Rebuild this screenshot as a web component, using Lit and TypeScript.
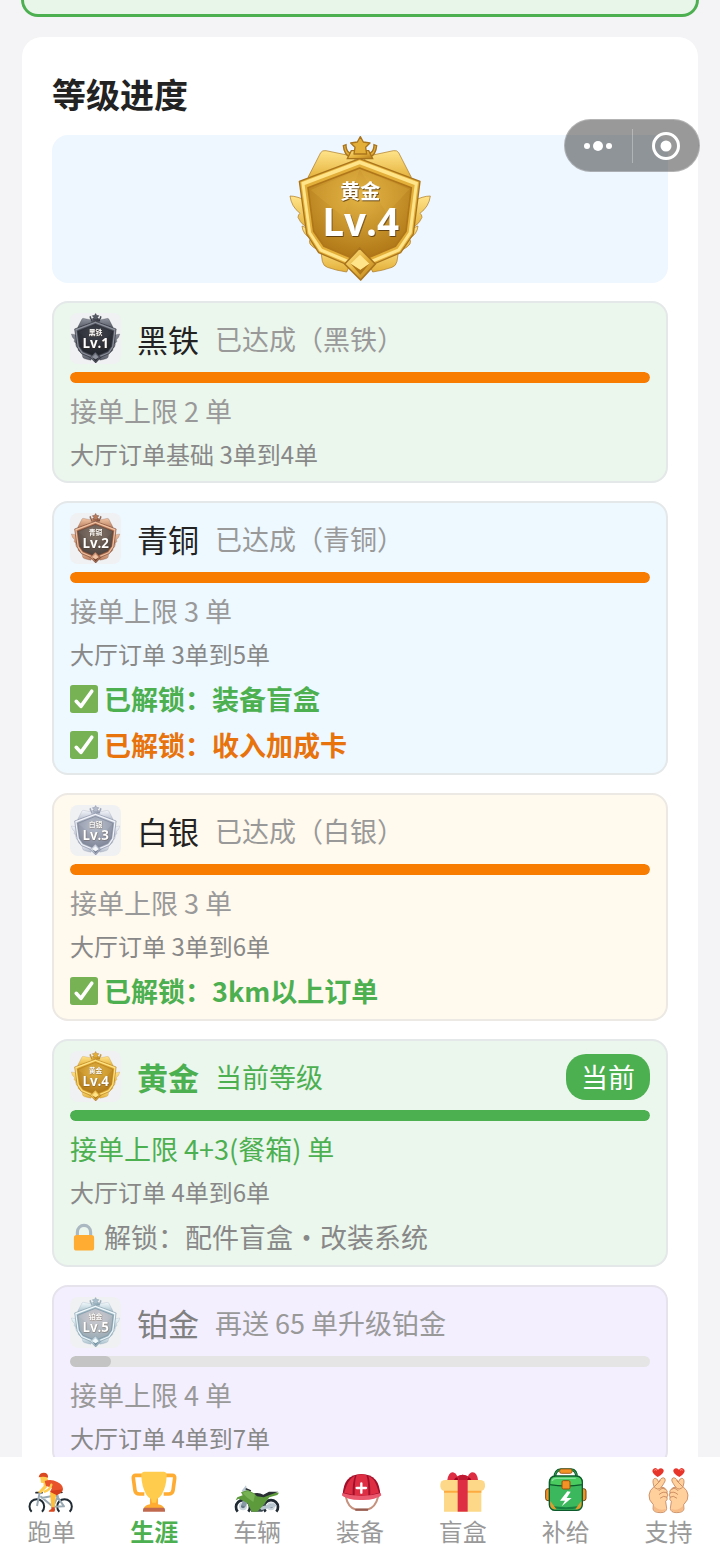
import { LitElement, html, svg, css } from 'lit';
import { customElement, property, state } from 'lit/decorators.js';
import { classMap } from 'lit/directives/class-map.js';
import { styleMap } from 'lit/directives/style-map.js';

interface Palette {
  light: string;
  mid: string;
  dark: string;
  edge: string;
  face: string;
  faceLight: string;
}

interface Unlock {
  icon: 'check' | 'lock';
  tone: string;
  text: string;
}

interface Level {
  level: number;
  name: string;
  status: string;
  progress: number;
  limit: string;
  hall: string;
  theme: string;
  state: 'done' | 'current' | 'locked';
  unlocks: Unlock[];
}

const PALETTES: Record<number, Palette> = {
  1: { light: '#8f939d', mid: '#565a65', dark: '#2b2d35', edge: '#22242b', face: '#202229', faceLight: '#40434d' },
  2: { light: '#f0c4a4', mid: '#b97c5c', dark: '#6b3e2c', edge: '#6a4032', face: '#4a403b', faceLight: '#85756a' },
  3: { light: '#f4f6fb', mid: '#b4bccb', dark: '#737b8e', edge: '#8189a0', face: '#7d8496', faceLight: '#b9bfcd' },
  4: { light: '#ffe48a', mid: '#e3af38', dark: '#b0761a', edge: '#a9741c', face: '#ad7414', faceLight: '#e3b445' },
  5: { light: '#f2fafd', mid: '#a9c0cc', dark: '#6c8b9b', edge: '#7f9aa8', face: '#98a9b3', faceLight: '#cfccd2' },
};

const LEVELS: Level[] = [
  {
    level: 1, name: '黑铁', status: '已达成（黑铁）', progress: 100, limit: '接单上限 2 单',
    hall: '大厅订单基础 3单到4单', theme: 'green', state: 'done', unlocks: [],
  },
  {
    level: 2, name: '青铜', status: '已达成（青铜）', progress: 100, limit: '接单上限 3 单',
    hall: '大厅订单 3单到5单', theme: 'blue', state: 'done',
    unlocks: [
      { icon: 'check', tone: 'tone-green', text: '已解锁：装备盲盒' },
      { icon: 'check', tone: 'tone-orange', text: '已解锁：收入加成卡' },
    ],
  },
  {
    level: 3, name: '白银', status: '已达成（白银）', progress: 100, limit: '接单上限 3 单',
    hall: '大厅订单 3单到6单', theme: 'cream', state: 'done',
    unlocks: [{ icon: 'check', tone: 'tone-green', text: '已解锁：3km以上订单' }],
  },
  {
    level: 4, name: '黄金', status: '当前等级', progress: 100, limit: '接单上限 4+3(餐箱) 单',
    hall: '大厅订单 4单到6单', theme: 'green', state: 'current',
    unlocks: [{ icon: 'lock', tone: 'tone-grey', text: '解锁：配件盲盒・改装系统' }],
  },
  {
    level: 5, name: '铂金', status: '再送 65 单升级铂金', progress: 7, limit: '接单上限 4 单',
    hall: '大厅订单 4单到7单', theme: 'purple', state: 'locked', unlocks: [],
  },
];

const checkIcon = html`<svg class="mark" viewBox="0 0 36 36" aria-hidden="true">
  <rect width="36" height="36" rx="3.5" fill="#77b255" />
  <path d="M8 21 L14 27.5 L28 8" fill="none" stroke="#fff" stroke-width="4.6" stroke-linecap="round" stroke-linejoin="round" />
</svg>`;

const lockIcon = html`<svg class="mark" viewBox="0 0 36 36" aria-hidden="true">
  <path d="M9.5 18 V11.5 a8.5 8.5 0 0 1 17 0 V18" fill="none" stroke="#aab8c2" stroke-width="4" />
  <rect x="5" y="15.5" width="26" height="20" rx="3.5" fill="#ffac33" />
</svg>`;

const NAV = [
  {
    label: '跑单',
    art: svg`
      <g fill="none" stroke="#1f2a33" stroke-width="6">
        <path d="M14 137 A22 22 0 1 1 45 137" />
        <path d="M97 137 A22 22 0 1 1 128 137" />
      </g>
      <path d="M27 80 h18" stroke="#292f33" stroke-width="5" stroke-linecap="round" />
      <path d="M38 80 L30 120 M40 91 L78 122 L94 88 M44 96 L88 88 L111 121 L78 122 M82 78 L92 92" fill="none" stroke="#9aaab4" stroke-width="6" stroke-linejoin="round" />
      <path d="M88 75 q16 -4 20 5 q-10 4 -20 0z" fill="#292f33" />
      <path d="M39 31 h20 l5 12 -9 9 -13 -2z" fill="#ffcc4d" />
      <path d="M35 34 q3 -16 21 -13 q8 3 7 14 q-13 -5 -28 -1z" fill="#d9481f" />
      <path d="M49 43 L58 46 L60 64 L42 82 L33 79 L50 60z" fill="#ffcc4d" />
      <path d="M53 45 q20 -7 38 3 q15 7 17 20 q0 9 -9 12 l-24 3 -6 -5 6 -13 -18 -5z" fill="#e9532b" />
      <path d="M73 56 q-3 14 -20 21" fill="none" stroke="#ffcc4d" stroke-width="7" stroke-linecap="round" />
      <path d="M70 75 L106 70 q-6 17 -22 19z" fill="#d63f1b" />
      <path d="M69 78 l18 8 -4 39 -10 0z" fill="#ffbf3a" />
      <path d="M73 124 h10 q3 10 -1 13 h-17 q0 -5 8 -8z" fill="#d9481f" />`,
  },
  {
    label: '生涯',
    art: svg`
      <path d="M38 28 H17 Q9 28 10 37 L15 74 Q17 84 28 84 H43 M105 28 H127 Q135 28 134 37 L129 74 Q127 84 116 84 H101" fill="none" stroke="#ffac33" stroke-width="11" />
      <path d="M60 88 h24 v27 q14 2 19 12 h-62 q5 -10 19 -12z" fill="#ffac33" />
      <path d="M42 17 H102 Q111 18 110 30 Q109 62 95 86 Q85 100 72 100 Q59 100 49 86 Q35 62 34 30 Q33 18 42 17z" fill="#ffcc4d" />
      <path d="M62 92 h20 l-4 18 h-12z" fill="#ffcc4d" />
      <path d="M44 125 h56 q5 0 5 6 v6 H39 v-6 q0 -6 5 -6z" fill="#c1694f" />`,
  },
  {
    label: '车辆',
    art: svg`
      <g fill="none" stroke="#1f2a33" stroke-width="8">
        <path d="M14 137 A21 21 0 1 1 46 137" />
        <path d="M98 137 A21 21 0 1 1 130 137" />
      </g>
      <circle cx="30" cy="121" r="12" fill="#ccd6dd" />
      <circle cx="114" cy="121" r="12" fill="#ccd6dd" />
      <circle cx="30" cy="121" r="6" fill="#657786" />
      <circle cx="114" cy="121" r="6" fill="#657786" />
      <path d="M39 58 L26 74 L34 82 L43 78" fill="#b9c8d2" />
      <path d="M40 69 L52 74" stroke="#292f33" stroke-width="5" stroke-linecap="round" />
      <path d="M36 84 L25 118 L38 122 L48 96z" fill="#8899a6" />
      <path d="M52 96 L92 92 L100 121 L88 137 L54 137z" fill="#3e4b54" />
      <path d="M76 124 L124 112 L132 120 L86 132z" fill="#b8c6cf" />
      <path d="M24 79 L44 72 L66 83 L86 91 L111 78 L138 80 L133 87 L109 94 L91 118 L73 137 H56 L43 111 L18 98 L8 103 L13 94 L29 88z" fill="#5c9a3b" />
      <path d="M28 80 L45 75 L66 86 L61 108 L43 95z" fill="#77b255" />
      <path d="M63 82 Q79 79 91 86 L108 77 L136 77 L112 86 L92 94 L72 91z" fill="#292f33" />`,
  },
  {
    label: '装备',
    art: svg`
      <path d="M29 90 Q36 127 61 131 H93 Q118 127 127 90" fill="none" stroke="#c6927e" stroke-width="6" />
      <path d="M61 131 h32" stroke="#965c50" stroke-width="7" stroke-linecap="round" />
      <path d="M20 90 Q21 25 76 24 Q132 25 133 90 Q76 108 20 90z" fill="#a0102a" />
      <path d="M33 56 Q41 37 57 29 Q49 49 50 86 L24 80z M62 27 Q76 22 91 27 Q98 47 97 89 H56 Q55 47 62 27z M97 29 Q115 38 121 57 L129 80 L103 87 Q103 47 97 29z" fill="#dd2e44" />
      <path d="M19 81 Q76 99 134 81 L136 88 Q118 103 77 102 Q34 103 18 88z" fill="#ea596e" />
      <path d="M76 52 v28 M62 66 h28" stroke="#fff" stroke-width="7" stroke-linecap="round" />`,
  },
  {
    label: '盲盒',
    art: svg`
      <path d="M15 65 h112 v72 h-112z" fill="#fdd888" />
      <rect x="4" y="42" width="134" height="33" rx="14" fill="#fdd888" />
      <path d="M15 74 h112 v6 h-112z" fill="#fcab40" />
      <path d="M56 42 h30 v95 h-30z" fill="#dd2e44" />
      <path d="M25 42 Q29 18 42 19 Q51 21 55 31 Q71 21 87 31 Q91 20 101 19 Q114 20 117 42z" fill="#dd2e44" />
      <path d="M57 31 Q71 21 86 31 L83 42 H60z" fill="#be1931" />
      <path d="M45 42 Q48 33 55 34 L58 42z M97 42 Q94 33 87 34 L84 42z" fill="#a0041e" />`,
  },
  {
    label: '补给',
    art: svg`
      <path d="M39 34 Q38 13 57 11 H87 Q105 13 103 34" fill="none" stroke="#0d5b2c" stroke-width="8" />
      <path d="M39 34 Q38 13 57 11 H87 Q105 13 103 34" fill="none" stroke="#2fa756" stroke-width="3" />
      <rect x="53" y="9" width="37" height="13" rx="5" fill="#f39325" stroke="#9a4f0e" stroke-width="2.5" />
      <rect x="11" y="68" width="20" height="36" rx="7" fill="#f39325" stroke="#7a450f" stroke-width="3" />
      <rect x="112" y="68" width="20" height="36" rx="7" fill="#f39325" stroke="#7a450f" stroke-width="3" />
      <rect x="22" y="32" width="99" height="101" rx="17" fill="#3bb85d" stroke="#0d5b2c" stroke-width="4" />
      <path d="M31 123 Q71 130 112 123" fill="none" stroke="#178040" stroke-width="6" />
      <path d="M25 105 v12 q2 11 12 13 h6z M118 105 v12 q-2 11 -12 13 h-6z" fill="#e79a2c" />
      <path d="M23 49 Q23 31 40 30 H103 Q120 31 121 49 V56 Q72 64 23 56z" fill="#4acb60" stroke="#0d5b2c" stroke-width="4" />
      <path d="M31 43 Q34 37 43 37 H100" fill="none" stroke="#89e29d" stroke-width="4" stroke-linecap="round" />
      <rect x="60" y="44" width="24" height="25" rx="4" fill="#f39325" stroke="#9a4f0e" stroke-width="3" />
      <path d="M76 76 L54 104 H69 L59 121 L89 96 H74 L86 77z" fill="#fff" />`,
  },
  {
    label: '支持',
    art: svg`
      ${[1, -1].map((side) => svg`
        <g transform=${side === 1 ? 'translate(0 0)' : 'translate(141 0) scale(-1 1)'}>
          <path d="M38 33 Q18 20 23 11 Q31 1 39 11 Q50 2 56 12 Q58 22 38 33z" fill="#e8352c" />
          <path d="M29 12 q3 -3 6 0" fill="none" stroke="#ff9a8e" stroke-width="3" stroke-linecap="round" />
          <path d="M24 50 Q23 37 31 37 Q38 38 40 47 L48 38 Q55 32 60 38 Q63 44 56 53 L49 64 Q60 63 62 70 Q69 73 66 81 Q71 87 66 93 Q69 101 62 106 L65 127 Q64 140 47 140 Q26 140 24 129 L25 116 Q10 102 12 87 Q13 73 27 62z" fill="#ffcf9c" stroke="#b56f46" stroke-width="2" stroke-linejoin="round" />
          <path d="M30 60 L46 44 M27 62 Q38 76 49 64 M42 74 Q51 62 61 70 M43 85 Q55 74 66 81 M46 96 Q56 87 65 93" fill="none" stroke="#b56f46" stroke-width="2" stroke-linecap="round" />
          <path d="M27 120 Q42 136 62 129 Q60 138 46 138 Q28 138 27 129z" fill="#f6ba86" />
        </g>`)}`,
  },
];

@customElement('level-badge')
export class LevelBadge extends LitElement {
  @property({ type: Number }) level = 1;
  @property() name = '';

  static styles = css`
    :host {
      display: block;
    }

    svg {
      display: block;
      width: 100%;
      height: 100%;
    }

    text {
      font-weight: bold;
      text-anchor: middle;
      fill: white;
    }

    .label {
      filter: drop-shadow(2px 3px 2px rgba(60, 35, 10, 0.7));
    }

    .name {
      font-family: 'Noto Sans CJK SC', sans-serif;
      font-size: 60px;
    }

    .lv {
      font-family: 'Open Sans', sans-serif;
      font-size: 116px;
    }
  `;

  render() {
    const p = PALETTES[this.level];
    return html`
      <svg viewBox="48 45 444 444" role="img" aria-label="${this.name} Lv.${this.level}">
        <defs>
          <linearGradient id="metal" x1="0" y1="0" x2="1" y2="1">
            <stop offset="0" stop-color=${p.light} />
            <stop offset="0.55" stop-color=${p.mid} />
            <stop offset="1" stop-color=${p.dark} />
          </linearGradient>
          <linearGradient id="plate" x1="0" y1="0" x2="0" y2="1">
            <stop offset="0" stop-color=${p.light} />
            <stop offset="1" stop-color=${p.mid} />
          </linearGradient>
          <radialGradient id="face" cx="0.5" cy="0.3" r="0.7">
            <stop offset="0" stop-color=${p.faceLight} />
            <stop offset="1" stop-color=${p.face} />
          </radialGradient>
        </defs>
        <g fill="url(#plate)" stroke=${p.edge} stroke-width="2" stroke-linejoin="round">
          <path d="M114 172 L152 98 Q157 90 168 92 L236 106 L264 124 L150 180z M424 172 L386 98 Q381 90 370 92 L304 106 L274 124 L388 180z" />
          <path d="M150 376 L246 420 L230 456 Q200 452 172 442 Q160 438 157 424z M388 376 L292 420 L308 456 Q338 452 366 442 Q378 438 381 424z" />
          <path d="M96 318 L138 336 L166 396 Q134 390 120 372 Q116 362 122 356 Q98 342 96 318z M444 318 L402 336 L374 396 Q406 390 420 372 Q424 362 418 356 Q442 342 444 318z" />
          <path d="M60 228 Q82 228 112 244 L128 330 Q96 320 84 292 Q84 284 90 280 Q64 260 60 228z M481 228 Q458 228 428 244 L412 330 Q444 320 456 292 Q456 284 450 280 Q477 260 481 228z" />
        </g>
        <path d="M220 77 Q222 104 242 113 L238 98 Q228 92 228 74z M320 77 Q318 104 298 113 L302 98 Q312 92 312 74z" fill=${p.mid} stroke=${p.edge} stroke-width="4" />
        <path d="M244 92 L296 92 L308 116 L232 116z" fill="url(#metal)" stroke=${p.edge} stroke-width="4" />
        <path d="M271 50 L280 66 L300 69 L287 82 L290 102 H252 L255 82 L242 69 L262 66z" fill=${p.mid} stroke=${p.edge} stroke-width="4" stroke-linejoin="round" />
        <path d="M269 116 L450 184 L430 342 L392 398 L269 450 L146 398 L110 342 L88 184z" fill=${p.mid} stroke=${p.edge} stroke-width="4" stroke-linejoin="round" />
        <path d="M269 121 L444 187 L425 340 L389 394 L269 444 L149 394 L115 340 L94 187 Z M269 133 L434 195 L416 337 L383 386 L269 434 L156 386 L123 337 L104 195z" fill=${p.light} fill-rule="evenodd" />
        <path d="M269 144 L424 203 L408 334 L376 379 L269 424 L162 379 L131 334 L114 203z" fill="url(#face)" stroke=${p.dark} stroke-width="5" stroke-linejoin="round" />
        <path d="M269 148 L220 290 L122 210z M269 148 L350 280 L418 208z" fill=${p.faceLight} opacity="0.25" />
        <path d="M269 384 L316 432 L272 480 L224 432z" fill="url(#metal)" stroke=${p.edge} stroke-width="5" stroke-linejoin="round" />
        <path d="M270 404 L298 431 L271 450 L242 431z" fill=${p.light} />
        <path d="M242 431 L271 450 L298 431 L271 464z" fill=${p.dark} />
        <g class="label">
          <text class="name" x="271" y="237">${this.name}</text>
          <text class="lv" x="272" y="347">Lv.${this.level}</text>
        </g>
      </svg>
    `;
  }
}

@customElement('level-card')
export class LevelCard extends LitElement {
  @property({ attribute: false }) item!: Level;

  static styles = css`
    :host {
      display: block;
    }

    .card {
      border: 2px solid #e4e8e8;
      border-radius: 16px;
      padding: 10px 16px 9px;
    }

    .green {
      background-color: #ebf6ed;
    }

    .blue {
      background-color: #eef8ff;
    }

    .cream {
      border-color: #ece9e4;
      background-color: #fff9ee;
    }

    .purple {
      border-color: #e6e3ec;
      background-color: #f3efff;
    }

    .head {
      display: flex;
      align-items: center;
      height: 51px;
    }

    level-badge {
      width: 51px;
      height: 51px;
      border-radius: 8px;
      background-color: #f0f1f3;
    }

    h3 {
      margin: 0 16px;
      font-size: 31px;
      font-weight: 400;
      color: #222;
    }

    .status {
      font-size: 27px;
      color: #999;
    }

    .tag {
      margin-left: auto;
      padding: 0 15px;
      border-radius: 20px;
      background-color: #4caf50;
      color: white;
      font-size: 27px;
      line-height: 46px;
    }

    .bar {
      height: 11px;
      margin: 8px 0;
      border-radius: 6px;
      background-color: #e5e5e5;
      overflow: hidden;
    }

    .fill {
      height: 100%;
      border-radius: 6px;
      background-color: #f77c00;
    }

    p {
      margin: 0;
    }

    .limit {
      font-size: 27px;
      line-height: 39px;
      color: #999;
    }

    .hall {
      margin-top: 6px;
      font-size: 24px;
      line-height: 36px;
      color: #888;
    }

    .unlock {
      display: flex;
      align-items: center;
      gap: 6px;
      margin-top: 7px;
      font-size: 27px;
      line-height: 39px;
    }

    .mark {
      width: 28px;
      height: 28px;
    }

    .tone-green {
      color: #4caf50;
      font-weight: bold;
    }

    .tone-orange {
      color: #e8730c;
      font-weight: bold;
    }

    .tone-grey {
      color: #888;
    }

    .current h3 {
      color: #4caf50;
      font-weight: bold;
    }

    .current .status,
    .current .limit {
      color: #4caf50;
    }

    .current .fill {
      background-color: #4caf50;
    }

    .locked h3 {
      color: #808080;
    }

    .locked .fill {
      background-color: #c4c4c4;
    }
  `;

  render() {
    const item = this.item;
    return html`
      <article class=${classMap({ card: true, [item.theme]: true, [item.state]: true })}>
        <div class="head">
          <level-badge .level=${item.level} .name=${item.name}></level-badge>
          <h3>${item.name}</h3>
          <span class="status">${item.status}</span>
          ${item.state === 'current' ? html`<span class="tag">当前</span>` : ''}
        </div>
        <div class="bar">
          <div class="fill" style=${styleMap({ width: `${item.progress}%` })}></div>
        </div>
        <p class="limit">${item.limit}</p>
        <p class="hall">${item.hall}</p>
        ${item.unlocks.map((u) => html`
          <p class="unlock ${u.tone}">${u.icon === 'check' ? checkIcon : lockIcon}<span>${u.text}</span></p>
        `)}
      </article>
    `;
  }
}

@customElement('app-root')
export class AppRoot extends LitElement {
  @state() private active = '生涯';

  static styles = css`
    :host {
      position: relative;
      display: flex;
      flex-direction: column;
      height: 100vh;
      background-color: #f4f4f6;
      font-family: 'Noto Sans CJK SC', sans-serif;
      color: #222;
    }

    main {
      flex: 1;
      min-height: 0;
      padding: 0 22px;
      overflow-y: auto;
      scrollbar-width: none;
    }

    .banner {
      height: 14px;
      margin: 0 -1px 20px;
      border: 3px solid #4caf50;
      border-top: none;
      border-radius: 0 0 20px 20px;
      background-color: #e8f5e9;
    }

    .panel {
      padding: 30px 30px 40px;
      border-radius: 20px;
      background-color: white;
    }

    h2 {
      margin: 0 0 14px;
      font-size: 34px;
      line-height: 54px;
      font-weight: bold;
    }

    .hero {
      display: flex;
      justify-content: center;
      margin-bottom: 18px;
      border-radius: 16px;
      background-color: #eef7ff;
    }

    .hero level-badge {
      width: 148px;
      height: 148px;
    }

    .levels {
      display: flex;
      flex-direction: column;
      gap: 18px;
    }

    .capsule {
      position: absolute;
      top: 119px;
      right: 20px;
      display: flex;
      align-items: center;
      box-sizing: border-box;
      width: 136px;
      height: 53px;
      border: 1px solid rgba(255, 255, 255, 0.25);
      border-radius: 27px;
      background-color: rgba(0, 0, 0, 0.4);
    }

    button {
      padding: 0;
      border: none;
      background: none;
      font-family: inherit;
      cursor: pointer;
    }

    .capsule button {
      display: flex;
      flex: 1;
      justify-content: center;
    }

    .capsule svg {
      width: 30px;
      height: 30px;
    }

    .divider {
      width: 1px;
      height: 34px;
      background-color: rgba(255, 255, 255, 0.3);
    }

    nav {
      display: grid;
      grid-template-columns: repeat(7, 1fr);
      padding: 9px 0 13px;
      background-color: white;
    }

    .tab {
      display: flex;
      flex-direction: column;
      align-items: center;
      color: #999;
      font-size: 24px;
      line-height: 34px;
    }

    .tab svg {
      width: 48px;
      height: 48px;
    }

    .tab.active {
      color: #4caf50;
      font-weight: bold;
    }
  `;

  render() {
    return html`
      <main>
        <div class="banner"></div>
        <section class="panel">
          <h2>等级进度</h2>
          <div class="hero">
            <level-badge .level=${4} .name=${'黄金'}></level-badge>
          </div>
          <div class="levels">
            ${LEVELS.map((item) => html`<level-card .item=${item}></level-card>`)}
          </div>
        </section>
      </main>
      <nav>
        ${NAV.map((tab) => html`
          <button
            type="button"
            class=${classMap({ tab: true, active: tab.label === this.active })}
            @click=${() => { this.active = tab.label; }}
          >
            <svg viewBox="0 0 144 144" aria-hidden="true">${tab.art}</svg>
            <span>${tab.label}</span>
          </button>
        `)}
      </nav>
      <div class="capsule">
        <button type="button" aria-label="更多">
          <svg viewBox="0 0 30 30" fill="#fff">
            <circle cx="4" cy="15" r="3" />
            <circle cx="15" cy="15" r="5" />
            <circle cx="26" cy="15" r="3" />
          </svg>
        </button>
        <span class="divider"></span>
        <button type="button" aria-label="关闭">
          <svg viewBox="0 0 30 30">
            <circle cx="15" cy="15" r="12.5" fill="none" stroke="#fff" stroke-width="3" />
            <circle cx="15" cy="15" r="5.5" fill="#fff" />
          </svg>
        </button>
      </div>
    `;
  }
}
